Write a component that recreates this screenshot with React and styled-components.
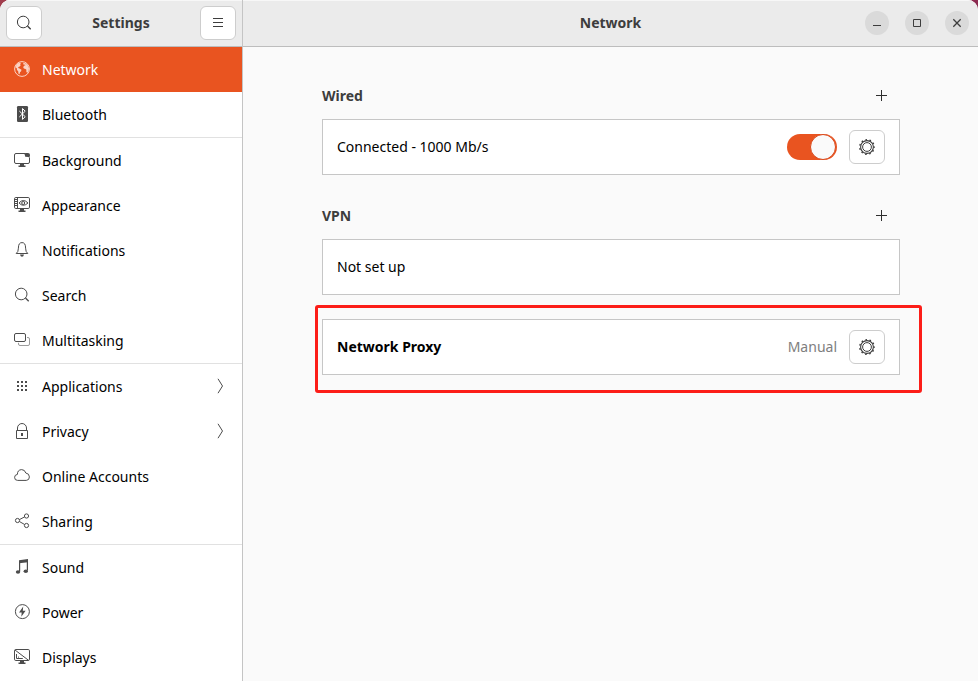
import React from "react";
import styled, { createGlobalStyle, css } from "styled-components";

const GlobalStyle = createGlobalStyle`
  * { box-sizing: border-box; }
  body {
    margin: 0;
    background: linear-gradient(90deg, #a03c4c, #8c2a50);
    color: #000;
    font-family: "Noto Sans", "Open Sans", sans-serif;
    font-size: 14px;
    line-height: 20px;
  }
`;

const Window = styled.div`
  display: grid;
  grid-template-columns: 243px minmax(0, 1fr);
  min-height: 100vh;
  border-radius: 10px 10px 0 0;
  overflow: hidden;
  background: #fafafa;
`;

const Column = styled.div`
  display: flex;
  flex-direction: column;
  min-width: 0;
`;

const SidebarColumn = styled(Column)`
  border-right: 1px solid #c4c4c4;
  background: #fff;
`;

const HeaderBar = styled.header`
  display: grid;
  grid-template-columns: 1fr auto 1fr;
  align-items: center;
  height: 47px;
  padding: 0 ${(p) => (p.$wide ? 9 : 6)}px;
  background: #ebebeb;
  border-bottom: 1px solid #bdbdbd;
  box-shadow: inset 0 1px #f7f7f7;
`;

const Title = styled.h1`
  grid-column: 2;
  margin: 0;
  color: #3d3d3d;
  font-size: 14px;
  font-weight: 700;
  line-height: 20px;
`;

const SquareButton = styled.button`
  display: flex;
  align-items: center;
  justify-content: center;
  justify-self: ${(p) => (p.$end ? "end" : "start")};
  width: 36px;
  height: 34px;
  padding: 0;
  border: 1px solid #cdcdcd;
  border-radius: 6px;
  background: #fff;
  color: #3d3d3d;
`;

const WindowControls = styled.div`
  display: flex;
  justify-content: flex-end;
  gap: 16px;
`;

const RoundButton = styled.button`
  display: flex;
  align-items: center;
  justify-content: center;
  width: 24px;
  height: 24px;
  padding: 0;
  border: 0;
  border-radius: 50%;
  background: #dadada;
  color: #3d3d3d;
`;

const NavGroup = styled.ul`
  margin: 0;
  padding: 0;
  list-style: none;
  & + & { border-top: 1px solid #e1e1e1; }
`;

const NavLink = styled.a`
  display: flex;
  align-items: center;
  gap: 12px;
  height: 45px;
  padding: 0 14px;
  color: #000;
  text-decoration: none;
  svg {
    margin-bottom: 1px;
    color: #4c4c4c;
  }
  ${(p) =>
    p.$active &&
    css`
      background: #e95420;
      color: #fff;
      svg { color: #fbd3c5; }
    `}
`;

const NavLabel = styled.span`
  flex: 1;
`;

const Content = styled.main`
  display: flex;
  flex-direction: column;
  gap: 24px;
  padding: 32px 78px 24px 79px;
`;

const Section = styled.section`
  position: relative;
`;

const SectionHeader = styled.div`
  display: flex;
  align-items: center;
  justify-content: space-between;
  height: 34px;
  margin-bottom: 6px;
`;

const SectionTitle = styled.h2`
  margin: 0;
  color: #3d3d3d;
  font-size: 14px;
  font-weight: 700;
  line-height: 20px;
`;

const PlainButton = styled.button`
  display: flex;
  align-items: center;
  justify-content: center;
  width: 36px;
  height: 34px;
  padding: 0;
  border: 0;
  background: none;
  color: #2e2e2e;
`;

const Card = styled.div`
  display: flex;
  align-items: center;
  gap: 12px;
  min-height: 56px;
  padding: 0 14px;
  border: 1px solid #c6c6c6;
  background: #fff;
`;

const CardLabel = styled.label`
  flex: 1;
  font-weight: ${(p) => (p.$strong ? 700 : 400)};
`;

const Status = styled.span`
  color: #7e7e7e;
`;

const Switch = styled.input`
  appearance: none;
  display: flex;
  align-items: center;
  width: 50px;
  height: 26px;
  margin: 0;
  padding: 0 1px;
  border-radius: 13px;
  background: #c6c6c6;
  &::before {
    content: "";
    width: 24px;
    height: 24px;
    border: 1px solid #d9481a;
    border-radius: 50%;
    background: #fafafa;
  }
  &:checked {
    justify-content: flex-end;
    background: #e95420;
  }
`;

const Highlight = styled.div`
  position: absolute;
  inset: -14px -22px -18px -7px;
  border: 3px solid #fc1d18;
  border-radius: 3px;
  pointer-events: none;
`;

const Svg = ({ children, w = 16, h = 16 }) => (
  <svg width={w} height={h} viewBox={`0 0 ${w} ${h}`} fill="none" stroke="currentColor" aria-hidden="true">
    {children}
  </svg>
);

const solid = { fill: "currentColor", stroke: "none" };

const icons = {
  network: (
    <>
      <circle cx="8" cy="8" r="7.4" />
      <path {...solid} d="M1.5 5.2 3.6 2.6 6 1.5l.8.9-.8 1 .8.7-1.1 1.3-1.3.6-.2 1 1.3.5 2 1.3-.4 1.5-1.1 1-.5 1.9-1-.4-.3-2.6-1.2-1.3-.2-1.6L1.6 6.6zM9.5 1.8l2.4.7 2 2 1.1 2.8-.5 2.9-1.4 1.9-.8-1.6.1-1.7-.9-.9-1.6-.3-.7-1.4.8-1.5 1.4-.5-.3-.6-1.2.1-.7-.6z" />
    </>
  ),
  bluetooth: (
    <>
      <rect {...solid} x="3" y="0" width="11" height="16" rx="1.2" />
      <path stroke="#fff" d="m5.3 5 5.9 5.7-2.7 2.7V2.5l2.7 2.7L5.3 11" />
    </>
  ),
  background: (
    <>
      <path d="M10 1.5H2A1.5 1.5 0 0 0 .5 3v7A1.5 1.5 0 0 0 2 11.5h12a1.5 1.5 0 0 0 1.5-1.5V6" />
      <path {...solid} d="M9 1h2q4.5.4 5 5-1.2-1.3-4.8-1.3Q11.4 2.3 9 1zM11.5 1H14a2 2 0 0 1 2 2v1.6Q14.7 1.7 11.5 1zM6 12h4v1.5h1.5V15h-7v-1.5H6z" />
    </>
  ),
  appearance: (
    <>
      <rect x=".5" y=".5" width="15" height="11" rx="1.3" />
      <path d="M3.5.5v11M1 2.5h2.5M1 4.5h2.5M1 6.5h2.5M1 8.5h2.5M5 6q4.2-5 9 0-4.8 4.5-9 0" />
      <circle cx="9.2" cy="6" r="1.5" />
      <path {...solid} d="M6 12h4v1.5h1.5V15h-7v-1.5H6z" />
    </>
  ),
  notifications: (
    <>
      <path d="M2.2 11.5Q4.4 10 4.4 6.2C4.4 2.4 5.5.6 8 .6s3.6 1.8 3.6 5.6q0 3.8 2.2 5.3z" />
      <path {...solid} d="M6 12.5h4Q9.5 14.7 8 14.7T6 12.5z" />
    </>
  ),
  search: (
    <>
      <circle cx="7.2" cy="7" r="5.8" />
      <path d="m11.5 11 3.2 3.2" strokeWidth="1.3" />
    </>
  ),
  multitasking: (
    <>
      <rect x=".5" y="1.5" width="11" height="8" rx="1.5" />
      <path opacity=".55" d="M13 5.5h1A1.5 1.5 0 0 1 15.5 7v5a1.5 1.5 0 0 1-1.5 1.5H6A1.5 1.5 0 0 1 4.5 12v-1.2" />
    </>
  ),
  applications: (
    <path {...solid} d="M3 3h2v2H3zM7 3h2v2H7zM11 3h2v2h-2zM3 7h2v2H3zM7 7h2v2H7zM11 7h2v2h-2zM3 11h2v2H3zM7 11h2v2H7zM11 11h2v2h-2z" />
  ),
  privacy: (
    <>
      <path d="M2.5 7.5h11v8h-11zM3.5 7.5V5a4.5 4.5 0 0 1 9 0v2.5" />
      <path {...solid} d="M7 10h2v3H7z" />
    </>
  ),
  online: (
    <path d="M3.6 12.4A3 3 0 0 1 .6 9.3q0-2.5 2.8-2.9 0-4.5 4.2-4.8 3.2 0 4.2 3.4 3.5.5 3.6 3.9 0 3.3-3.1 3.5z" />
  ),
  sharing: (
    <>
      <circle cx="3.5" cy="7.5" r="2.1" />
      <circle cx="12.5" cy="3" r="2.1" />
      <circle cx="12.5" cy="12.5" r="2.1" />
      <path d="m5.4 6.6 5.2-2.7M5.4 8.5l5.2 3" />
    </>
  ),
  sound: (
    <>
      <path {...solid} d="M5 1.2 14 0v3.3L5 4.3z" />
      <path d="M5.6 3v9.5M13.4 2v9.5" strokeWidth="1.2" />
      <ellipse {...solid} cx="4" cy="13" rx="2.2" ry="1.8" />
      <ellipse {...solid} cx="11.8" cy="12.2" rx="2.2" ry="1.8" />
    </>
  ),
  power: (
    <>
      <circle cx="8.4" cy="7.6" r="7" />
      <path {...solid} d="M9.2 2.5 5 8.4h2.7l-.4 4.3 4.3-6H8.8z" />
    </>
  ),
  displays: (
    <>
      <rect x=".5" y=".5" width="15" height="11" rx="1.3" />
      <path d="m1 1 13.5 10.3M2.5 5v4.5h6.3M4.5 7.6v1" />
      <path {...solid} d="M6 12h4v1.5h1.5V15h-7v-1.5H6z" />
    </>
  ),
};

const Gear = () => (
  <Svg>
    <circle cx="8" cy="8" r="6.4" strokeWidth="1.1" />
    <circle cx="8" cy="8" r="7.3" strokeWidth="1.3" strokeDasharray="1.6 2.57" strokeDashoffset=".8" />
    <circle cx="8" cy="8" r="4.4" />
  </Svg>
);

const Plus = () => (
  <Svg w={12} h={12}>
    <path d="M5.5 0v11M0 5.5h11" shapeRendering="crispEdges" />
  </Svg>
);

const groups = [
  [
    ["network", "Network"],
    ["bluetooth", "Bluetooth"],
  ],
  [
    ["background", "Background"],
    ["appearance", "Appearance"],
    ["notifications", "Notifications"],
    ["search", "Search"],
    ["multitasking", "Multitasking"],
  ],
  [
    ["applications", "Applications", true],
    ["privacy", "Privacy", true],
    ["online", "Online Accounts"],
    ["sharing", "Sharing"],
  ],
  [
    ["sound", "Sound"],
    ["power", "Power"],
    ["displays", "Displays"],
  ],
];

function Sidebar() {
  return (
    <SidebarColumn>
      <HeaderBar>
        <SquareButton aria-label="Search settings"><Svg>{icons.search}</Svg></SquareButton>
        <Title>Settings</Title>
        <SquareButton $end aria-label="Menu">
          <Svg><path d="M3 3.5h10M3 7.5h10M3 11.5h10" /></Svg>
        </SquareButton>
      </HeaderBar>
      <nav aria-label="Settings">
        {groups.map((items) => (
          <NavGroup key={items[0][0]}>
            {items.map(([id, label, nested]) => (
              <li key={id}>
                <NavLink href={`#${id}`} $active={id === "network"} aria-current={id === "network" ? "page" : undefined}>
                  <Svg>{icons[id]}</Svg>
                  <NavLabel>{label}</NavLabel>
                  {nested && <Svg><path d="m6 .8 4.5 7.2L6 15.2" /></Svg>}
                </NavLink>
              </li>
            ))}
          </NavGroup>
        ))}
      </nav>
    </SidebarColumn>
  );
}

export default function App() {
  return (
    <>
      <GlobalStyle />
      <Window>
        <Sidebar />
        <Column>
          <HeaderBar $wide>
            <Title as="h2">Network</Title>
            <WindowControls>
              <RoundButton aria-label="Minimize"><Svg><path d="M4 10.5h8" /></Svg></RoundButton>
              <RoundButton aria-label="Maximize"><Svg><path d="M4.5 4.5h7v7h-7z" /></Svg></RoundButton>
              <RoundButton aria-label="Close"><Svg><path d="m4.3 4.3 7.4 7.4m0-7.4-7.4 7.4" strokeWidth="1.3" /></Svg></RoundButton>
            </WindowControls>
          </HeaderBar>
          <Content>
            <Section>
              <SectionHeader>
                <SectionTitle>Wired</SectionTitle>
                <PlainButton aria-label="Add wired connection"><Plus /></PlainButton>
              </SectionHeader>
              <Card>
                <CardLabel htmlFor="wired">Connected - 1000 Mb/s</CardLabel>
                <Switch id="wired" type="checkbox" role="switch" defaultChecked />
                <SquareButton aria-label="Wired options"><Gear /></SquareButton>
              </Card>
            </Section>
            <Section>
              <SectionHeader>
                <SectionTitle>VPN</SectionTitle>
                <PlainButton aria-label="Add VPN"><Plus /></PlainButton>
              </SectionHeader>
              <Card>Not set up</Card>
            </Section>
            <Section>
              <Card>
                <CardLabel htmlFor="proxy-options" $strong>Network Proxy</CardLabel>
                <Status>Manual</Status>
                <SquareButton id="proxy-options"><Gear /></SquareButton>
              </Card>
              <Highlight />
            </Section>
          </Content>
        </Column>
      </Window>
    </>
  );
}
